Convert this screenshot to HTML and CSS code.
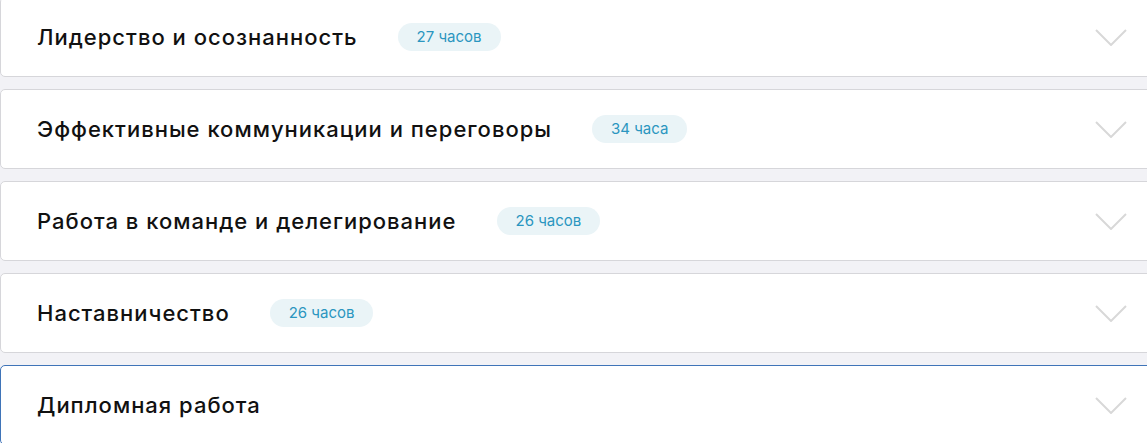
FILE: index.html
```html
<!DOCTYPE html>
<html lang="ru">
<head>
    <meta charset="UTF-8">
    <meta name="viewport" content="width=device-width, initial-scale=1.0">
    <title>Программа курса</title>
    <link rel="stylesheet" href="styles.css">
</head>
<body>
    <div class="modules">
        <div class="module">
            <h3 class="module-title">Лидерство и осознанность</h3>
            <span class="hours">27 часов</span>
            <svg class="chevron" viewBox="0 0 32 17"><path d="M1 1 L16 16 L31 1"/></svg>
        </div>
        <div class="module">
            <h3 class="module-title">Эффективные коммуникации и переговоры</h3>
            <span class="hours">34 часа</span>
            <svg class="chevron" viewBox="0 0 32 17"><path d="M1 1 L16 16 L31 1"/></svg>
        </div>
        <div class="module">
            <h3 class="module-title">Работа в команде и делегирование</h3>
            <span class="hours">26 часов</span>
            <svg class="chevron" viewBox="0 0 32 17"><path d="M1 1 L16 16 L31 1"/></svg>
        </div>
        <div class="module">
            <h3 class="module-title">Наставничество</h3>
            <span class="hours">26 часов</span>
            <svg class="chevron" viewBox="0 0 32 17"><path d="M1 1 L16 16 L31 1"/></svg>
        </div>
        <div class="module active">
            <h3 class="module-title">Дипломная работа</h3>
            <svg class="chevron" viewBox="0 0 32 17"><path d="M1 1 L16 16 L31 1"/></svg>
        </div>
    </div>
</body>
</html>
```

FILE: styles.css
```css
body {
    margin: 0;
    background-color: #f2f2f6;
    font-family: Inter, "Noto Sans", sans-serif;
    overflow: hidden;
}
.modules {
    display: flex;
    flex-direction: column;
    gap: 12px;
    margin-top: -3px;
    width: 1180px;
}
.module {
    display: flex;
    align-items: center;
    height: 78px;
    padding: 0 0 0 36px;
    background-color: #fff;
    border: 1px solid #d6d6da;
    border-radius: 5px;
}
.module.active {
    border-color: #3f74b8;
}
.module-title {
    margin: 0 40px 0 0;
    font-size: 22px;
    font-weight: 500;
    color: #111;
    letter-spacing: 1px;
}
.hours {
    padding: 5px 19px;
    border-radius: 14px;
    background-color: #eaf4f7;
    color: #2b96c0;
    font-size: 15px;
    line-height: 18px;
}
.chevron {
    width: 32px;
    height: 17px;
    margin-left: auto;
    margin-right: 52px;
    fill: none;
    stroke: #d8d8d8;
    stroke-width: 2;
}
```
